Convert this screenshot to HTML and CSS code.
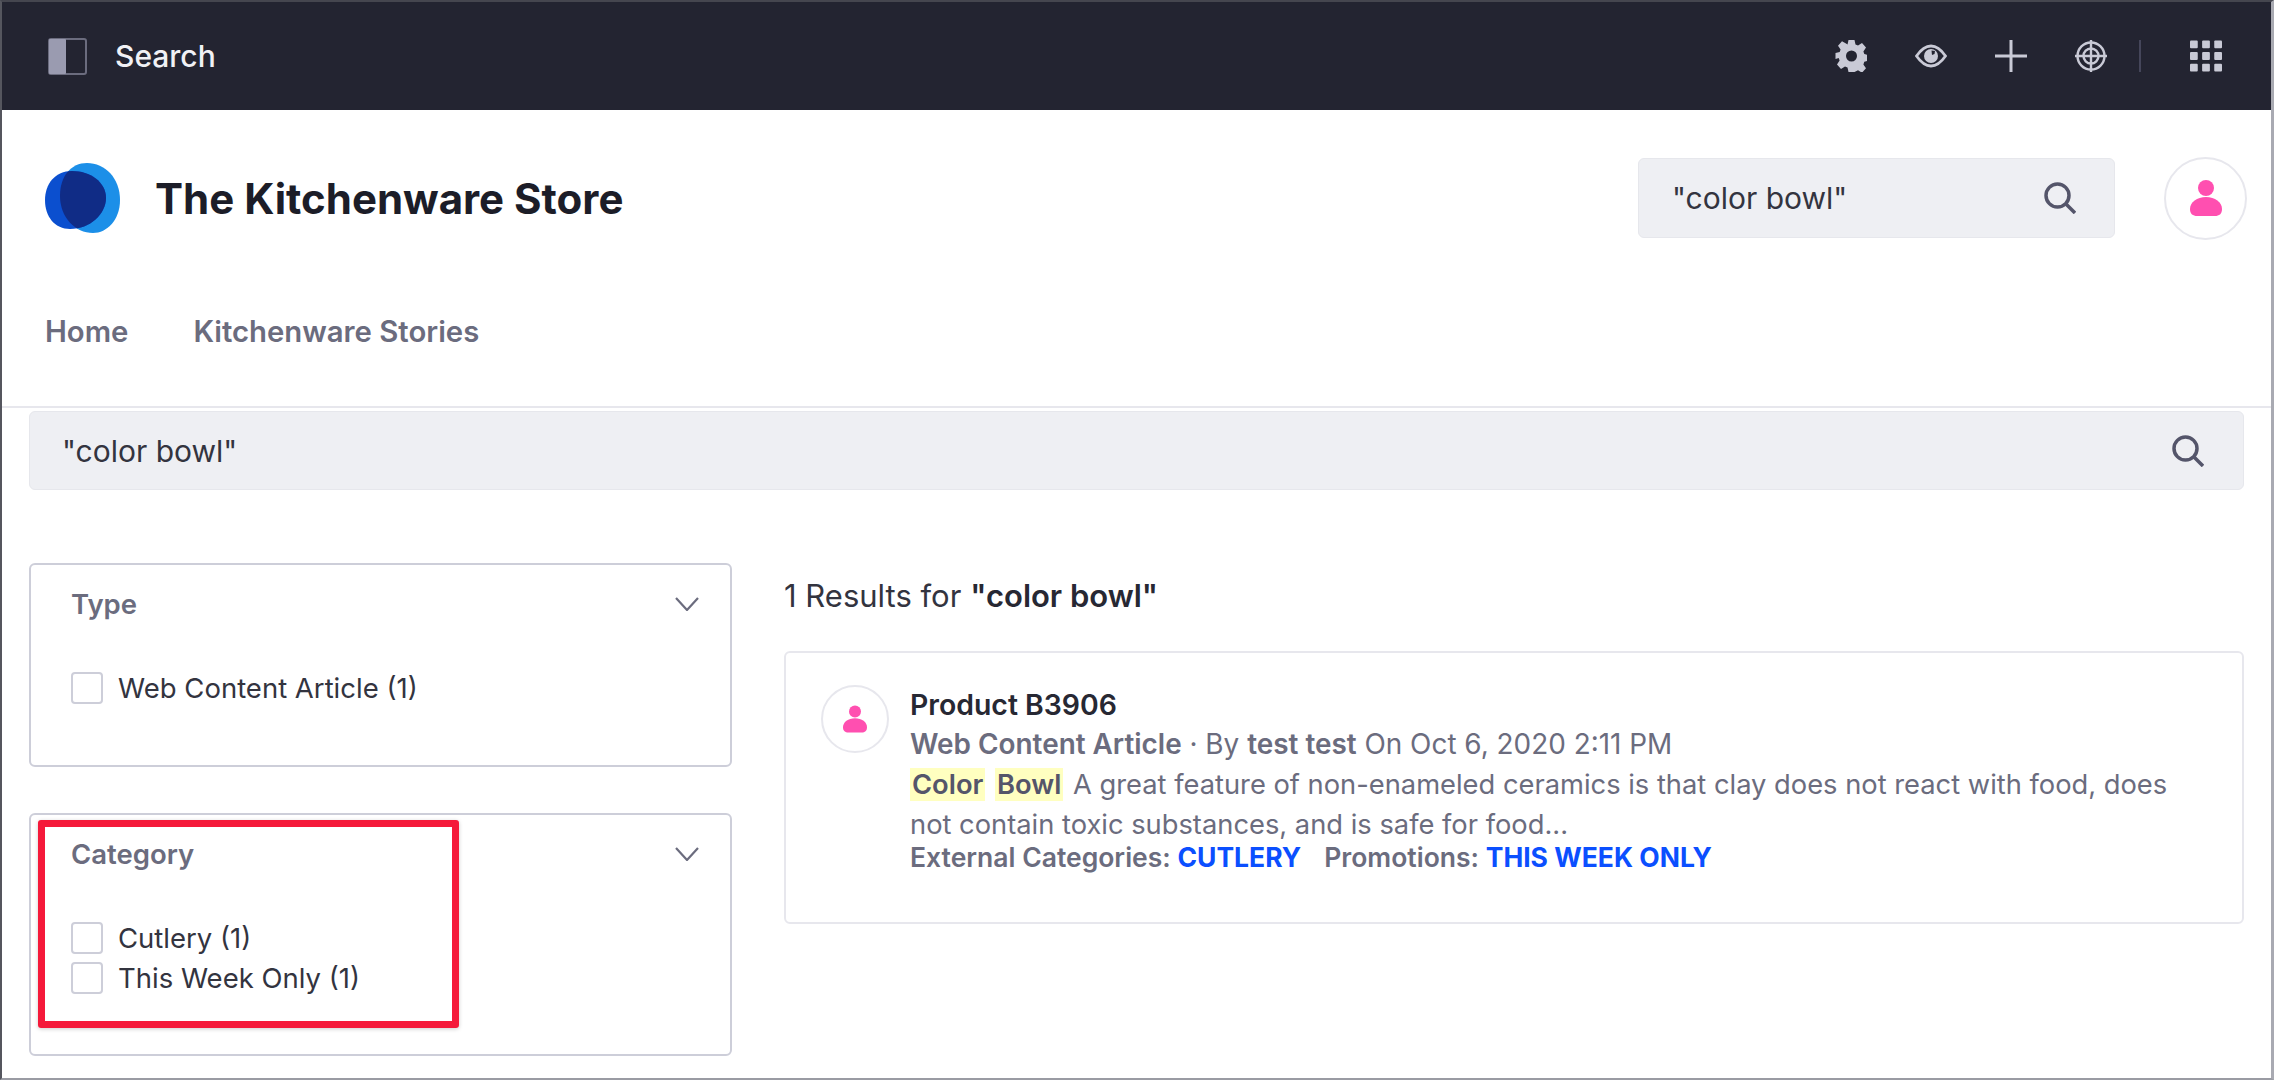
FILE: index.html
```html
<!DOCTYPE html>
<html lang="en">
<head>
  <meta charset="UTF-8">
  <meta name="viewport" content="width=device-width, initial-scale=1.0">
  <title>Search - The Kitchenware Store</title>
  <link rel="stylesheet" href="styles.css">
</head>
<body>
  <div class="frame">

    <!-- Control menu -->
    <div class="control-bar">
      <div class="control-left">
        <svg class="panel-icon" viewBox="0 0 39 37">
          <rect x="1" y="1" width="37" height="35" rx="2" fill="none" stroke="#6b6c7e" stroke-width="2"/>
          <rect x="1" y="1" width="17" height="35" rx="1" fill="#9a9bb0"/>
        </svg>
        <span class="control-title">Search</span>
      </div>
      <div class="control-right">
        <svg class="control-icon" viewBox="0 0 32 32">
          <path fill="#c9cad6" fill-rule="evenodd" d="M13 0h6l1 4.4 2.5 1.1 4-2.4 4 4.5-2.6 3.8.9 2.6 3.2.9v6l-3.2.9-.9 2.6 2.6 3.8-4 4.5-4-2.4-2.5 1.1L19 32h-6l-1-4.4-2.5-1.1-4 2.4-4-4.5 2.6-3.8-.9-2.6L0 19v-6l4.2-.9.9-2.6L2.500 5.700l4-4.500 4 2.400L12 4.400z M16 10.500a5.500 5.500 0 1 0 0 11 5.500 5.500 0 0 0 0-11z" transform="translate(0.500 0)"/>
        </svg>
        <svg class="control-icon" viewBox="0 0 32 32">
          <path fill="none" stroke="#c9cad6" stroke-width="2.800" d="M1.500 16C6 9.500 11 6 16 6s10 3.500 14.500 10C26 22.500 21 26 16 26S6 22.500 1.500 16z"/>
          <circle cx="16" cy="16" r="7" fill="#c9cad6"/>
          <path fill="#232431" d="M16.500 10.500l3.500.5-.5 3-2.500 1z"/>
        </svg>
        <svg class="control-icon" viewBox="0 0 32 32">
          <path stroke="#c9cad6" stroke-width="3" d="M16 0v32M0 16h32"/>
        </svg>
        <svg class="control-icon" viewBox="0 0 32 32">
          <g fill="none" stroke="#c9cad6" stroke-width="2.400">
            <circle cx="16" cy="16" r="13.500"/>
            <circle cx="16" cy="16" r="7.500"/>
            <path d="M16 0v32M0 16h32"/>
          </g>
        </svg>
        <div class="control-divider"></div>
        <svg class="control-icon" viewBox="0 0 33 32">
          <g fill="#c9cad6">
            <rect x="0" y="0" width="8" height="8" rx="1"/><rect x="12.500" y="0" width="8" height="8" rx="1"/><rect x="25" y="0" width="8" height="8" rx="1"/>
            <rect x="0" y="12" width="8" height="8" rx="1"/><rect x="12.500" y="12" width="8" height="8" rx="1"/><rect x="25" y="12" width="8" height="8" rx="1"/>
            <rect x="0" y="24" width="8" height="8" rx="1"/><rect x="12.500" y="24" width="8" height="8" rx="1"/><rect x="25" y="24" width="8" height="8" rx="1"/>
          </g>
        </svg>
      </div>
    </div>

    <!-- Site header -->
    <header class="site-header">
      <div class="brand">
        <svg class="logo" viewBox="0 0 76 72">
          <defs>
            <clipPath id="logoClip"><path d="M42 1C60 1 75 16 75 38 75 58 62 71 48 71 30 71 15 55 15 34 15 14 26 1 42 1z"/></clipPath>
          </defs>
          <path fill="#1c8fe8" d="M42 1C60 1 75 16 75 38 75 58 62 71 48 71 30 71 15 55 15 34 15 14 26 1 42 1z"/>
          <path fill="#0b4fcf" d="M27 9C45 9 61 20 61 36 61 52 45 67 25 67 10 67 0 55 0 38 0 22 10 9 27 9z"/>
          <path fill="#102c86" clip-path="url(#logoClip)" d="M27 9C45 9 61 20 61 36 61 52 45 67 25 67 10 67 0 55 0 38 0 22 10 9 27 9z"/>
        </svg>
        <span class="brand-name">The Kitchenware Store</span>
      </div>
      <div class="header-tools">
        <div class="search-box header-search">
          <span>"color bowl"</span>
          <svg class="search-icon" viewBox="0 0 32 32">
            <circle cx="13.500" cy="13.500" r="11.500" fill="none" stroke="#54556a" stroke-width="3.500"/>
            <path d="M22 22l9 9" stroke="#54556a" stroke-width="3.500" fill="none"/>
          </svg>
        </div>
        <div class="avatar avatar-large">
          <svg class="person" viewBox="0 0 32 36">
            <ellipse cx="16" cy="8" rx="8" ry="8" fill="#ff4fb0"/>
            <path fill="#ff4fb0" d="M16 17c9 0 16 5 16 12 0 5-3 7-7 7H7c-4 0-7-2-7-7 0-7 7-12 16-12z"/>
          </svg>
        </div>
      </div>
    </header>

    <nav class="site-nav">
      <a>Home</a>
      <a>Kitchenware Stories</a>
    </nav>

    <!-- Page content -->
    <div class="search-box page-search">
      <span>"color bowl"</span>
      <svg class="search-icon" viewBox="0 0 32 32">
        <circle cx="13.500" cy="13.500" r="11.500" fill="none" stroke="#54556a" stroke-width="3.500"/>
        <path d="M22 22l9 9" stroke="#54556a" stroke-width="3.500" fill="none"/>
      </svg>
    </div>

    <div class="content">
      <aside class="facets">
        <section class="facet facet-type">
          <div class="facet-head">
            <span>Type</span>
            <svg class="chevron" viewBox="0 0 24 14"><path d="M1 1l11 12L23 1" fill="none" stroke="#6b6c7e" stroke-width="2.200"/></svg>
          </div>
          <label class="facet-option"><input type="checkbox"><span>Web Content Article (1)</span></label>
        </section>

        <section class="facet facet-category">
          <div class="facet-head">
            <span>Category</span>
            <svg class="chevron" viewBox="0 0 24 14"><path d="M1 1l11 12L23 1" fill="none" stroke="#6b6c7e" stroke-width="2.200"/></svg>
          </div>
          <label class="facet-option"><input type="checkbox"><span>Cutlery (1)</span></label>
          <label class="facet-option"><input type="checkbox"><span>This Week Only (1)</span></label>
          <div class="callout"></div>
        </section>
      </aside>

      <main class="results">
        <p class="results-count">1 Results for <strong>"color bowl"</strong></p>
        <article class="result-card">
          <div class="avatar avatar-small">
            <svg class="person" viewBox="0 0 32 36">
              <ellipse cx="16" cy="8" rx="8" ry="8" fill="#ff4fb0"/>
              <path fill="#ff4fb0" d="M16 17c9 0 16 5 16 12 0 5-3 7-7 7H7c-4 0-7-2-7-7 0-7 7-12 16-12z"/>
            </svg>
          </div>
          <div class="result-body">
            <h3 class="result-title">Product B3906</h3>
            <div class="result-meta"><strong>Web Content Article</strong> · By <strong>test test</strong> On Oct 6, 2020 2:11 PM</div>
            <p class="result-text"><mark>Color</mark> <mark>Bowl</mark> <span>A great feature of non-enameled ceramics is that clay does not react with food, does</span><br><span>not contain toxic substances, and is safe for food...</span></p>
            <div class="result-tags">
              <span>External Categories: <a>CUTLERY</a></span>
              <span>Promotions: <a>THIS WEEK ONLY</a></span>
            </div>
          </div>
        </article>
      </main>
    </div>

  </div>
</body>
</html>
```

FILE: styles.css
```css
html, body {
  margin: 0;
  padding: 0;
  background-color: #fff;
}

body {
  width: 2276px;
  height: 1080px;
  overflow: hidden;
  font-family: Inter, "Noto Sans", sans-serif;
  color: #272833;
}

.frame {
  box-sizing: border-box;
  width: 2274px;
  height: 1080px;
  border-top: 2px solid #45464f;
  border-left: 2px solid #55565e;
  border-right: 3px solid #a9aab2;
  border-bottom: 2px solid #9a9ba3;
  overflow: hidden;
}

/* Control menu */
.control-bar {
  display: flex;
  align-items: center;
  justify-content: space-between;
  height: 108px;
  padding: 0 49px 0 46px;
  background-color: #232431;
}

.control-left {
  display: flex;
  align-items: center;
  gap: 28px;
}

.panel-icon {
  width: 39px;
  height: 37px;
}

.control-title {
  font-size: 30px;
  font-weight: 500;
  color: #f1f1f5;
}

.control-right {
  display: flex;
  align-items: center;
  gap: 48px;
}

.control-icon {
  width: 32px;
  height: 32px;
  flex: none;
}

.control-divider {
  width: 2px;
  height: 32px;
  margin-left: -16px;
  margin-right: 1px;
  background-color: #45465a;
}

/* Site header */
.site-header {
  display: flex;
  align-items: center;
  justify-content: space-between;
  height: 82px;
  padding: 47px 24px 0 43px;
}

.brand {
  display: flex;
  align-items: center;
  gap: 34px;
}

.logo {
  width: 76px;
  height: 72px;
}

.brand-name {
  font-size: 42px;
  font-weight: 700;
  color: #1c1d28;
}

.header-tools {
  display: flex;
  align-items: center;
  gap: 49px;
}

.search-box {
  display: flex;
  align-items: center;
  justify-content: space-between;
  box-sizing: border-box;
  background-color: #eeeff3;
  border: 1px solid #e6e7ec;
  border-radius: 6px;
  font-size: 30px;
  color: #33343f;
}

.header-search {
  width: 477px;
  height: 80px;
  padding: 0 38px 0 33px;
}

.page-search {
  height: 79px;
  margin: 3px 27px 0;
  padding: 0 39px 0 32px;
}

.search-icon {
  width: 32px;
  height: 32px;
}

.avatar {
  display: flex;
  align-items: center;
  justify-content: center;
  box-sizing: border-box;
  flex: none;
  border: 2px solid #e7e7ed;
  border-radius: 50%;
}

.avatar-large {
  width: 83px;
  height: 83px;
}

.avatar-large .person {
  width: 32px;
  height: 36px;
}

.avatar-small {
  width: 68px;
  height: 68px;
}

.avatar-small .person {
  width: 24px;
  height: 28px;
}

.site-nav {
  display: flex;
  align-items: center;
  gap: 65px;
  height: 149px;
  padding-top: 18px;
  padding-left: 43px;
  border-bottom: 2px solid #e7e7ed;
  font-size: 29.300px;
  font-weight: 600;
  color: #6b6c7e;
}

/* Content */
.content {
  display: flex;
  gap: 52px;
  margin: 73px 27px 0;
}

.facets {
  display: flex;
  flex-direction: column;
  gap: 46px;
  width: 703px;
  flex: none;
}

.facet {
  position: relative;
  box-sizing: border-box;
  border: 2px solid #cdced9;
  border-radius: 6px;
  padding: 23px 31px 0 40px;
}

.facet-type {
  height: 204px;
}

.facet-category {
  height: 243px;
}

.facet-head {
  display: flex;
  align-items: center;
  justify-content: space-between;
  height: 32px;
  margin-bottom: 52px;
  font-size: 27.500px;
  font-weight: 600;
  color: #6b6c7e;
}

.chevron {
  width: 24px;
  height: 14px;
}

.facet-option {
  display: flex;
  align-items: center;
  gap: 15px;
  height: 32px;
  margin-bottom: 8px;
  font-size: 27.500px;
  color: #33343f;
}

.facet-option input {
  appearance: none;
  box-sizing: border-box;
  width: 32px;
  height: 32px;
  margin: 0;
  background-color: #fff;
  border: 2px solid #cdced9;
  border-radius: 4px;
}

.callout {
  position: absolute;
  top: 5px;
  left: 7px;
  box-sizing: border-box;
  width: 421px;
  height: 208px;
  border: 7px solid #f5193a;
  border-radius: 3px;
  box-shadow: 0 1px 4px rgba(0, 0, 0, 0.2);
}

/* Results */
.results {
  flex: 1;
}

.results-count {
  display: flex;
  gap: 9px;
  margin: 16px 0 38px;
  height: 34px;
  line-height: 34px;
  font-size: 31px;
  color: #33343f;
}

.results-count strong {
  font-weight: 600;
  color: #272833;
}

.result-card {
  display: flex;
  gap: 21px;
  box-sizing: border-box;
  height: 273px;
  padding: 32px 35px;
  border: 2px solid #e7e7ed;
  border-radius: 6px;
}

.result-title {
  margin: 0;
  height: 39px;
  line-height: 39px;
  font-size: 28.400px;
  font-weight: 600;
  color: #272833;
}

.result-meta {
  height: 40px;
  line-height: 40px;
  font-size: 27.900px;
  color: #6b6c7e;
}

.result-meta strong {
  font-weight: 600;
}

.result-text {
  margin: 1px 0 0;
  line-height: 40px;
  font-size: 27.300px;
  color: #6b6c7e;
}

.result-text mark {
  margin-right: 2px;
  padding: 0 2px;
  background-color: #ffffc0;
  font-weight: 600;
  color: #54556a;
}

.result-tags {
  display: flex;
  gap: 23px;
  margin-top: -5px;
  height: 34px;
  line-height: 34px;
  font-size: 26.500px;
  font-weight: 600;
  color: #6b6c7e;
}

.result-tags a {
  font-weight: 700;
  color: #0b4fff;
}
```
